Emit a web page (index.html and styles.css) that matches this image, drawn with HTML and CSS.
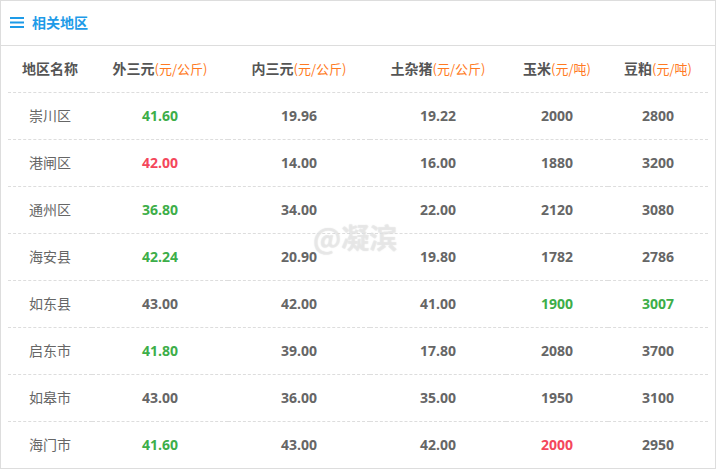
FILE: index.html
```html
<!DOCTYPE html>
<html lang="zh-CN">
<head>
    <meta charset="UTF-8">
    <meta name="viewport" content="width=device-width, initial-scale=1.0">
    <title>相关地区</title>
    <link rel="stylesheet" href="styles.css">
</head>
<body>
    <div class="area-box">
        <div class="area-title">
            <svg class="menu-icon" width="14" height="11" viewBox="0 0 14 11">
                <rect x="0" y="0" width="14" height="2" fill="#1e9be8"/>
                <rect x="0" y="4.5" width="14" height="2" fill="#1e9be8"/>
                <rect x="0" y="9" width="14" height="2" fill="#1e9be8"/>
            </svg>
            <span>相关地区</span>
        </div>
        <table class="price-table">
            <colgroup>
                <col style="width:84px">
                <col style="width:136px">
                <col style="width:142px">
                <col style="width:136px">
                <col style="width:102px">
                <col style="width:100px">
            </colgroup>
            <thead>
                <tr>
                    <th>地区名称</th>
                    <th>外三元<span class="unit">(元/公斤)</span></th>
                    <th>内三元<span class="unit">(元/公斤)</span></th>
                    <th>土杂猪<span class="unit">(元/公斤)</span></th>
                    <th>玉米<span class="unit">(元/吨)</span></th>
                    <th>豆粕<span class="unit">(元/吨)</span></th>
                </tr>
            </thead>
            <tbody>
                <tr><td>崇川区</td><td class="up">41.60</td><td>19.96</td><td>19.22</td><td>2000</td><td>2800</td></tr>
                <tr><td>港闸区</td><td class="down">42.00</td><td>14.00</td><td>16.00</td><td>1880</td><td>3200</td></tr>
                <tr><td>通州区</td><td class="up">36.80</td><td>34.00</td><td>22.00</td><td>2120</td><td>3080</td></tr>
                <tr><td>海安县</td><td class="up">42.24</td><td>20.90</td><td>19.80</td><td>1782</td><td>2786</td></tr>
                <tr><td>如东县</td><td>43.00</td><td>42.00</td><td>41.00</td><td class="up">1900</td><td class="up">3007</td></tr>
                <tr><td>启东市</td><td class="up">41.80</td><td>39.00</td><td>17.80</td><td>2080</td><td>3700</td></tr>
                <tr><td>如皋市</td><td>43.00</td><td>36.00</td><td>35.00</td><td>1950</td><td>3100</td></tr>
                <tr><td>海门市</td><td class="up">41.60</td><td>43.00</td><td>42.00</td><td class="down">2000</td><td>2950</td></tr>
            </tbody>
        </table>
        <div class="watermark">@凝滨</div>
    </div>
</body>
</html>
```

FILE: styles.css
```css
body {
    margin: 0;
    padding: 0;
    background-color: #fff;
    font-family: "Noto Sans CJK SC", "Noto Sans", sans-serif;
    color: #666;
}
.area-box {
    position: relative;
    width: 714px;
    height: 467px;
    border: 1px solid #ddd;
    overflow: hidden;
}
.area-title {
    display: flex;
    align-items: center;
    height: 41px;
    padding-left: 9px;
    padding-bottom: 3px;
    border-bottom: 1px solid #ddd;
    color: #1e9be8;
    font-size: 14px;
    font-weight: bold;
}
.area-title .menu-icon {
    margin-right: 8px;
    margin-top: 2px;
}
.price-table {
    width: 700px;
    margin: 0 7px;
    border-collapse: collapse;
    table-layout: fixed;
}
.price-table th,
.price-table td {
    height: 44px;
    padding: 0 0 2px;
    text-align: center;
    border-bottom: 1px dashed #ddd;
    font-size: 14px;
    white-space: nowrap;
}
.price-table th {
    color: #555;
    font-weight: bold;
}
.price-table th .unit {
    color: #ff7a22;
    font-weight: normal;
    font-size: 13px;
}
.price-table td {
    font-family: "Open Sans", "Noto Sans", sans-serif;
    font-weight: bold;
    color: #666;
}
.price-table td:first-child {
    font-family: "Noto Sans CJK SC", sans-serif;
    font-weight: normal;
}
.price-table tbody tr:last-child td {
    border-bottom: none;
}
.price-table td.up {
    color: #3dae49;
}
.price-table td.down {
    color: #f4475b;
}
.watermark {
    position: absolute;
    left: 312px;
    top: 216px;
    font-size: 28px;
    font-weight: bold;
    color: rgba(240, 240, 240, 0.6);
    text-shadow: 0 0 1px rgba(190, 190, 190, 0.6);
    pointer-events: none;
}
```
